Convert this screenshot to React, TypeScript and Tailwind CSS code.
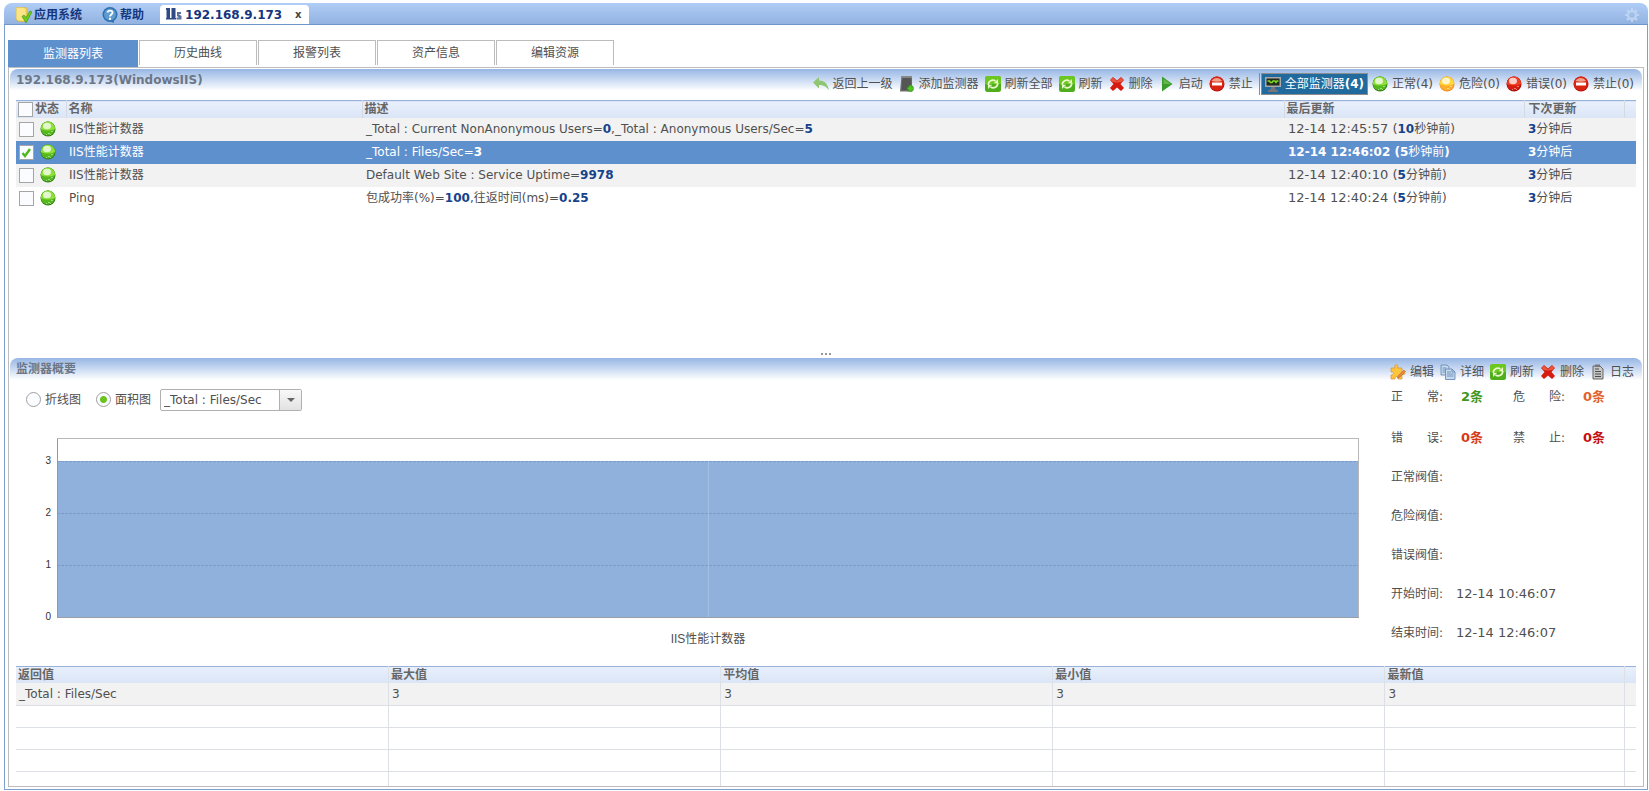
import { useState } from 'react'
import type { ReactNode } from 'react'

type BallColor = 'green' | 'yellow' | 'red'

const BALLS = {
  green: { light: '#8fe03a', mid: '#55b81c', dark: '#2f7f14' },
  yellow: { light: '#ffd83a', mid: '#ffae2b', dark: '#ee8d1c' },
  red: { light: '#ee3f22', mid: '#d41c0f', dark: '#a80f08' },
}

const MONITORS = [
  {
    name: 'IIS性能计数器',
    values: [['_Total : Current NonAnonymous Users=', '0'], [',_Total : Anonymous Users/Sec=', '5']],
    updated: '12-14 12:45:57', ago: '10', unit: '秒钟前',
  },
  {
    name: 'IIS性能计数器',
    values: [['_Total : Files/Sec=', '3']],
    updated: '12-14 12:46:02', ago: '5', unit: '秒钟前',
  },
  {
    name: 'IIS性能计数器',
    values: [['Default Web Site : Service Uptime=', '9978']],
    updated: '12-14 12:40:10', ago: '5', unit: '分钟前',
  },
  {
    name: 'Ping',
    values: [['包成功率(%)=', '100'], [',往返时间(ms)=', '0.25']],
    updated: '12-14 12:40:24', ago: '5', unit: '分钟前',
  },
]

const TABS = ['监测器列表', '历史曲线', '报警列表', '资产信息', '编辑资源']

function Ball({ color }: { color: BallColor }) {
  const c = BALLS[color]
  return (
    <svg viewBox="0 0 16 16" className="size-4 shrink-0">
      <circle cx="8" cy="8" r="7.5" fill={c.dark} />
      <circle cx="7.8" cy="7.5" r="7" fill={c.mid} />
      <path d="M.8 8a7.200 7.200 0 0 1 14.400 0Q8 11 .8 8z" fill={c.light} />
      <ellipse cx="7" cy="5" rx="4" ry="3.200" fill="#fff" opacity=".75" />
      <path d="M8 12h2v1H8zM11 10h2v1h-2zM6 13h1v1H6zM10 13h1v1h-1z" fill="#fff" opacity=".45" />
    </svg>
  )
}

function ForbidIcon() {
  return (
    <svg viewBox="0 0 16 16" className="size-4 shrink-0">
      <circle cx="8" cy="8" r="7.5" fill="#b5140a" />
      <circle cx="7.8" cy="7.5" r="7" fill="#d92412" />
      <path d="M2.500 5a6 6 0 0 1 10.500 0Q8 6.500 2.500 5z" fill="#f3a089" />
      <rect x="3" y="6.500" width="10" height="3" fill="#fff" />
    </svg>
  )
}

function BackIcon() {
  return (
    <svg viewBox="0 0 16 16" className="size-4 shrink-0">
      <path d="M0 6.500L6 1v3.500c6 0 9 4 10 10C13.500 10.500 10.500 9 6 9v3.500z" fill="#8fc672" />
    </svg>
  )
}

function AddIcon() {
  return (
    <svg viewBox="0 0 16 16" className="size-4 shrink-0">
      <path d="M1 15.500L2.500 0H13v15.500z" fill="#6c6c6c" />
      <path d="M3.500 2H12v12H2.500z" fill="#555" />
      <path d="M2.500 0H13v2H2.500z" fill="#868686" />
      <path d="M11.500 9.500v6M8.500 12.500h6" stroke="#2f8e17" strokeWidth="4" />
      <path d="M11.500 9.500v6M8.500 12.500h6" stroke="#52c81e" strokeWidth="2.200" />
    </svg>
  )
}

function RefreshIcon() {
  return (
    <svg viewBox="0 0 16 16" className="size-4 shrink-0">
      <rect width="16" height="16" rx="2.500" fill="#4fae1c" />
      <path d="M0 8V2.500A2.500 2.500 0 0 1 2.500 0h11A2.500 2.500 0 0 1 16 2.500V8z" fill="#6cc820" />
      <path d="M3.300 9c-.2-4 4-6 7.200-4M12.700 7c.2 4-4 6-7.200 4" fill="none" stroke="#e9f7c8" strokeWidth="1.700" />
      <path d="M13 3v4.200H8.800zM3 13V8.800h4.200z" fill="#e9f7c8" />
    </svg>
  )
}

function DeleteIcon() {
  return (
    <svg viewBox="0 0 16 16" className="size-4 shrink-0">
      <path d="M1 4l3-3 4 3.500L12 1l3 3-3.500 4 3.500 4-3 3-4-3.500L4 15l-3-3 3.500-4z" fill="#d61a10" />
      <path d="M1.500 4L4 1.500 8 5.500 12 1.500 14.500 4l-2 2L8 6.500 3.500 6z" fill="#e8553f" />
    </svg>
  )
}

function StartIcon() {
  return (
    <svg viewBox="0 0 16 16" className="size-4 shrink-0">
      <path d="M3 .5L13.500 8 3 15.500z" fill="#3b9b2d" />
      <path d="M4.500 3L12 8H4.500z" fill="#62b84b" />
    </svg>
  )
}

function MonitorIcon() {
  return (
    <svg viewBox="0 0 16 16" className="size-4 shrink-0">
      <path d="M0 1h16v10H0z" fill="#a8a8a8" />
      <path d="M1.500 2.500h13v7h-13z" fill="#222c1c" />
      <path d="M2.500 5h2l1 1.500h1.500l1-1.500h2l1 1.500 1-1.500h1.500" fill="none" stroke="#7ed827" strokeWidth="1.500" />
      <path d="M6 11h4v2l3 1.500V16H3v-1.500L6 13z" fill="#777" />
    </svg>
  )
}

function EditIcon() {
  return (
    <svg viewBox="0 0 16 16" className="size-4 shrink-0">
      <path d="M5 4c-1.500-4.500 4-4.500 2.700 0H12v4c4-.8 4 3.500 0 2.500V15H8c.7-3.500-3.500-3.500-3 0H1v-4c3.500 0 3.500-3.500 0-3V4z" fill="#fdc53c" stroke="#d99135" strokeWidth=".7" />
      <path d="M7.500 14l.8-2.500L14 6l1.500 1.500L10 13z" fill="#e8883d" stroke="#b35c22" strokeWidth=".5" />
    </svg>
  )
}

function DetailIcon() {
  return (
    <svg viewBox="0 0 16 16" className="size-4 shrink-0" fill="#c4d9ee" stroke="#5d83ad" strokeWidth=".8">
      <path d="M1 1h6l2 2v8H1z" />
      <path d="M5.500 5h6.500l3 3v7.500H5.500z" />
      <path d="M2.500 4h4M2.500 6h2.500M2.500 8h2.500M7 8h4M7 10h6.500M7 12h6.500M12 5v3h3" fill="none" />
    </svg>
  )
}

function LogIcon() {
  return (
    <svg viewBox="0 0 16 16" className="size-4 shrink-0">
      <path d="M3 2h7l3 3v10H3z" fill="#c6c6c6" stroke="#666" />
      <path d="M5 5h4M5 7.500h6M5 10h6M5 12.500h6" stroke="#4c4c4c" />
      <path d="M5 .5h5V3H5z" fill="#777" />
    </svg>
  )
}

function AppIcon() {
  return (
    <svg viewBox="0 0 16 16" className="size-4 shrink-0">
      <path d="M.5.5H10l1 1.500v12.500H3L.5 13z" fill="#f5d24e" stroke="#d9b43b" strokeWidth=".6" />
      <path d="M.5.800h7l2 1.800v11H3L.5 12z" fill="#fbe588" />
      <path d="M6 9.500l2-1.500 2 2.500L14 4l2 1-6 11z" fill="#6fcb1e" stroke="#3c9410" strokeWidth=".6" />
    </svg>
  )
}

function HelpIcon() {
  return (
    <svg viewBox="0 0 16 16" className="size-4 shrink-0">
      <circle cx="8" cy="7.500" r="7.500" fill="#2d6fae" />
      <path d="M7 14l5 2-.5-4z" fill="#2d6fae" />
      <circle cx="8" cy="7.500" r="6" fill="#5d9bd0" />
      <path d="M5.500 5.500C6 2.700 10.700 3 10.500 5.700 10.300 7.500 8.200 7.400 8 9.500" fill="none" stroke="#fff" strokeWidth="1.800" />
      <rect x="7" y="10.800" width="2" height="2" fill="#fff" />
    </svg>
  )
}

// three little server towers
function ServerIcon() {
  return (
    <svg viewBox="0 0 16 16" className="size-4 shrink-0" fill="#2f4a84">
      <path d="M0 1h4v2H0zM.5 3H4v8.500H.5zM0 11h5v1.500H0z" />
      <path d="M5.500 1h4v10.500h-4zM5 11h5v1.500H5z" />
      <path d="M11 5h4v2h-2.500l3 2v3.500h-5V10.500H13L11 9z" opacity=".8" />
    </svg>
  )
}

function GearIcon() {
  return (
    <svg viewBox="0 0 16 16" className="size-4 shrink-0" stroke="#bdd3f2" fill="none">
      <circle cx="8" cy="8" r="4" strokeWidth="2.400" />
      <path d="M8 1v2.500M8 12.500V15M1 8h2.500M12.500 8H15M3 3l1.800 1.800M11.200 11.200L13 13M3 13l1.800-1.800M11.200 4.800L13 3" strokeWidth="2.200" />
    </svg>
  )
}

function ToolButton({ icon, children }: { icon: ReactNode; children: ReactNode }) {
  return (
    <button type="button" className="flex items-center gap-1 whitespace-nowrap">
      {icon}
      <span>{children}</span>
    </button>
  )
}

function CheckBox({ label, checked, onChange }: { label: string; checked: boolean; onChange: () => void }) {
  return (
    <span className="grid size-[15px] shrink-0">
      <input
        type="checkbox"
        aria-label={label}
        checked={checked}
        onChange={onChange}
        className="peer col-start-1 row-start-1 size-[15px] appearance-none border border-[#a5a5a5] bg-[#fbfcff]"
      />
      <svg viewBox="0 0 15 15" className="pointer-events-none invisible col-start-1 row-start-1 size-[15px] peer-checked:visible">
        <path d="M3.500 8l2.500 3 5-7" fill="none" stroke="#4db81c" strokeWidth="2.400" />
      </svg>
    </span>
  )
}

function ChartRadio({ label, checked, onChange }: { label: string; checked: boolean; onChange: () => void }) {
  return (
    <label className="flex items-center gap-1">
      <input
        type="radio"
        name="chart"
        checked={checked}
        onChange={onChange}
        className="size-[15px] appearance-none rounded-full border border-[#a0a0a0] bg-[#fbfcff] checked:bg-[radial-gradient(circle,#6bc41c_3px,#fbfcff_4px)]"
      />
      {label}
    </label>
  )
}

function Count({ label, value, color }: { label: [string, string]; value: string; color: string }) {
  return (
    <div className="flex">
      <dt className="flex w-[70px] gap-6">
        <span>{label[0]}</span>
        <span>{label[1]}:</span>
      </dt>
      <dd className={`w-[52px] text-[13px] font-bold ${color}`}>{value}</dd>
    </div>
  )
}

function AreaChart() {
  return (
    <figure className="pt-[27px]">
      <div className="flex items-start">
        <div className="flex h-[185px] w-[47px] flex-col justify-between pt-[17px] pr-1.5 text-right font-[family-name:Liberation_Sans,sans-serif] text-[10px] leading-3 text-[#333]">
          <span>3</span>
          <span>2</span>
          <span>1</span>
          <span>0</span>
        </div>
        <svg className="h-[180px] min-w-0 flex-1" shapeRendering="crispEdges">
          <rect x="0" y="23" width="100%" height="156" fill="#8fb1dc" />
          <line x1="50%" x2="50%" y1="23" y2="179" stroke="#a3c0e4" />
          {[23, 75, 127].map(y => (
            <line key={y} x1="0" x2="100%" y1={y + 0.5} y2={y + 0.5} stroke="#7d9bc4" strokeDasharray="3 1" />
          ))}
          <path d="M.5 0v180" stroke="#8a9aaf" />
          <line x1="0" x2="100%" y1=".5" y2=".5" stroke="#b8b8b8" />
          <line x1="100%" x2="100%" y1="0" y2="180" stroke="#b8b8b8" strokeWidth="2" />
          <line x1="0" x2="100%" y1="179.500" y2="179.500" stroke="#9a9ea6" />
        </svg>
      </div>
      <figcaption className="pt-[7px] pl-[47px] text-center font-[family-name:Liberation_Sans,Noto_Sans_CJK_SC,sans-serif] leading-[18px]">
        IIS性能计数器
      </figcaption>
    </figure>
  )
}

export default function App() {
  const [tab, setTab] = useState(0)
  const [selected, setSelected] = useState([1])
  const [chart, setChart] = useState('area')

  function toggle(index: number) {
    setSelected(s => s.includes(index) ? s.filter(i => i !== index) : [...s, index])
  }

  return (
    <div className="flex min-h-screen flex-col bg-white pt-[3px] pr-px pb-px pl-1 font-[family-name:DejaVu_Sans,Noto_Sans_CJK_SC,sans-serif] text-xs text-[#505050]">
      <header className="flex h-[22px] shrink-0 items-center rounded-t-lg border-b border-[#6f96cc] bg-linear-to-b from-[#b0cdf6] to-[#92b2e0] pt-0.5 pr-2 pl-3 font-bold text-[#15367d]">
        <button type="button" className="flex items-center gap-0.5"><AppIcon />应用系统</button>
        <button type="button" className="ml-5 flex items-center gap-0.5"><HelpIcon />帮助</button>
        <div className="ml-4 flex h-full w-[149px] items-center gap-[3px] rounded-t bg-white pl-1.5">
          <ServerIcon />
          <span className="flex-1">192.168.9.173</span>
          <button type="button" aria-label="关闭" className="w-3.5 text-left text-[10px] text-[#444]">x</button>
        </div>
        <button type="button" aria-label="设置" className="ml-auto"><GearIcon /></button>
      </header>

      <main className="flex flex-1 flex-col border-x border-b border-[#7da0d0] px-[3px] pt-[15px] pb-0.5">
        <nav className="flex gap-px">
          {TABS.map((label, index) => (
            <button
              key={label}
              type="button"
              onClick={() => setTab(index)}
              className={index === tab
                ? 'h-[27px] w-[130px] bg-[#5f90ce] text-white'
                : 'h-[25px] w-[118px] border border-b-0 border-[#bcbcbc] bg-white'}
            >
              {label}
            </button>
          ))}
        </nav>

        <div className="flex flex-1 flex-col border border-[#bdbdbd] px-px pt-px">
          <section className="flex min-h-[280px] flex-1 flex-col">
            <div className="flex h-[31px] items-start justify-between rounded-t-lg bg-linear-to-b from-[#97b6e4] to-white to-70% pr-2 pl-1.5">
              <h1 className="leading-[22px] font-bold text-[#6b7686]">192.168.9.173(WindowsIIS)</h1>
              <div className="flex items-center gap-1.5 pt-1">
                <ToolButton icon={<BackIcon />}>返回上一级</ToolButton>
                <ToolButton icon={<AddIcon />}>添加监测器</ToolButton>
                <ToolButton icon={<RefreshIcon />}>刷新全部</ToolButton>
                <ToolButton icon={<RefreshIcon />}>刷新</ToolButton>
                <ToolButton icon={<DeleteIcon />}>删除</ToolButton>
                <ToolButton icon={<StartIcon />}>启动</ToolButton>
                <ToolButton icon={<ForbidIcon />}>禁止</ToolButton>
                <div className="flex items-center gap-1">
                  <div className="border-l border-[#8a8a8a] pl-px">
                    <button type="button" className="flex h-[22px] items-center gap-1 border border-[#8d8d8d] bg-[#216a9e] px-[3px] whitespace-nowrap text-white">
                      <MonitorIcon />
                      <span>全部监测器<b>(4)</b></span>
                    </button>
                  </div>
                  <ToolButton icon={<Ball color="green" />}>正常(4)</ToolButton>
                </div>
                <ToolButton icon={<Ball color="yellow" />}>危险(0)</ToolButton>
                <ToolButton icon={<Ball color="red" />}>错误(0)</ToolButton>
                <ToolButton icon={<ForbidIcon />}>禁止(0)</ToolButton>
              </div>
            </div>

            <div className="flex-1 px-1.5">
              <table className="w-full table-fixed border-collapse text-left">
                <colgroup>
                  <col className="w-[50px]" />
                  <col className="w-[296px]" />
                  <col />
                  <col className="w-[240px]" />
                  <col className="w-[100px]" />
                  <col className="w-3" />
                </colgroup>
                <thead>
                  <tr className="h-[17px] border-t border-[#97b1d9] bg-linear-to-b from-[#e9f0fc] to-[#dae5f6] leading-4 text-[#666]">
                    <th className="p-0">
                      <div className="flex items-center pl-0.5">
                        <CheckBox
                          label="全选"
                          checked={selected.length === MONITORS.length}
                          onChange={() => setSelected(selected.length === MONITORS.length ? [] : MONITORS.map((_, i) => i))}
                        />
                        <span className="pl-0.5 whitespace-nowrap">状态</span>
                      </div>
                    </th>
                    <th className="border-l border-[#d4d9e2] p-0 pl-0.5">名称</th>
                    <th className="border-l border-[#d4d9e2] p-0 pl-0.5">描述</th>
                    <th className="border-l border-[#d4d9e2] p-0 pl-0.5">最后更新</th>
                    <th className="border-l border-[#d4d9e2] p-0 pl-1">下次更新</th>
                    <th className="border-l border-[#d4d9e2] p-0" />
                  </tr>
                </thead>
                <tbody>
                  {MONITORS.map((row, index) => {
                    const on = selected.includes(index)
                    const number = on ? 'text-white' : 'text-[#15428b]'
                    return (
                      <tr key={index} className={on ? 'h-[23px] bg-[#5f90ce] text-white' : 'h-[23px] odd:bg-[#f2f2f2]'}>
                        <td className="p-0">
                          <div className="flex items-center gap-1.5 pl-[3px]">
                            <CheckBox label={`选择 ${index + 1}`} checked={on} onChange={() => toggle(index)} />
                            <Ball color="green" />
                          </div>
                        </td>
                        <td className="p-0 pl-[3px]">{row.name}</td>
                        <td className="truncate p-0 pl-1">
                          {row.values.map(([label, value]) => (
                            <span key={label}>{label}<b className={number}>{value}</b></span>
                          ))}
                        </td>
                        <td className="p-0 pl-1">
                          <span className={on ? 'font-bold' : 'text-[13px]'}>{row.updated} (</span>
                          <b className={number}>{row.ago}</b>{row.unit}
                          <span className={on ? 'font-bold' : ''}>)</span>
                        </td>
                        <td className="p-0 pl-1"><b className={number}>3</b>分钟后</td>
                        <td className="p-0" />
                      </tr>
                    )
                  })}
                </tbody>
              </table>
            </div>
            <div className="flex h-[7px] items-center justify-center gap-0.5">
              <i className="size-0.5 bg-[#999]" />
              <i className="size-0.5 bg-[#999]" />
              <i className="size-0.5 bg-[#999]" />
            </div>
          </section>

          <section>
            <div className="flex h-[22px] items-start justify-between rounded-t-lg bg-linear-to-b from-[#97b6e4] to-white pr-2 pl-1.5">
              <h2 className="leading-[22px] font-bold text-[#6b7686]">监测器概要</h2>
              <div className="flex items-center gap-1.5 pt-1.5">
                <ToolButton icon={<EditIcon />}>编辑</ToolButton>
                <ToolButton icon={<DetailIcon />}>详细</ToolButton>
                <ToolButton icon={<RefreshIcon />}>刷新</ToolButton>
                <ToolButton icon={<DeleteIcon />}>删除</ToolButton>
                <ToolButton icon={<LogIcon />}>日志</ToolButton>
              </div>
            </div>

            <div className="flex">
              <div className="min-w-0 flex-1">
                <div className="flex items-center gap-[15px] pt-[9px] pl-4">
                  <ChartRadio label="折线图" checked={chart === 'line'} onChange={() => setChart('line')} />
                  <ChartRadio label="面积图" checked={chart === 'area'} onChange={() => setChart('area')} />
                  <div className="-ml-1.5 grid h-[22px] w-[142px] grid-cols-[1fr_22px] rounded-xs border border-[#b0b0b0]">
                    <select aria-label="指标" className="col-span-2 col-start-1 row-start-1 appearance-none bg-transparent pl-[3px]">
                      <option>_Total : Files/Sec</option>
                    </select>
                    <span className="pointer-events-none col-start-2 row-start-1 flex items-center justify-center border-l border-[#b0b0b0] bg-linear-to-b from-[#f8f8f8] to-[#e2e2e2]">
                      <svg viewBox="0 0 8 4" className="h-1 w-2"><path d="M0 0h8L4 4z" fill="#666" /></svg>
                    </span>
                  </div>
                </div>
                <AreaChart />
              </div>

              <dl className="flex w-[283px] shrink-0 flex-col gap-[21px] pt-2 pl-8 leading-[18px]">
                <div className="flex pb-0.5">
                  <Count label={['正', '常']} value="2条" color="text-[#3f961c]" />
                  <Count label={['危', '险']} value="0条" color="text-[#e2622c]" />
                </div>
                <div className="flex">
                  <Count label={['错', '误']} value="0条" color="text-[#d63a17]" />
                  <Count label={['禁', '止']} value="0条" color="text-[#c41010]" />
                </div>
                <dt>正常阀值:</dt>
                <dt>危险阀值:</dt>
                <dt>错误阀值:</dt>
                <div className="flex">
                  <dt className="w-[65px]">开始时间:</dt>
                  <dd className="text-[13px]">12-14 10:46:07</dd>
                </div>
                <div className="flex">
                  <dt className="w-[65px]">结束时间:</dt>
                  <dd className="text-[13px]">12-14 12:46:07</dd>
                </div>
              </dl>
            </div>

            <div className="px-1.5 pt-[18px]">
              <table className="w-full table-fixed border-collapse text-left">
                <colgroup>
                  <col className="w-[23%]" />
                  <col className="w-[20.5%]" />
                  <col className="w-[20.5%]" />
                  <col className="w-[20.5%]" />
                  <col />
                  <col className="w-3" />
                </colgroup>
                <thead>
                  <tr className="h-[17px] border-t border-[#97b1d9] bg-linear-to-b from-[#e9f0fc] to-[#dae5f6] leading-4 text-[#666]">
                    {['返回值', '最大值', '平均值', '最小值', '最新值', ''].map(label => (
                      <th key={label} className="border-l border-[#dcdfe4] p-0 pl-0.5 first:border-l-0">{label}</th>
                    ))}
                  </tr>
                </thead>
                <tbody>
                  {[['_Total : Files/Sec', '3', '3', '3', '3', ''], null, null, null].map((row, index) => (
                    <tr key={index} className="h-[22px] border-b border-[#dcdfe4] first:bg-[#f2f2f2]">
                      {(row || ['', '', '', '', '', '']).map((cell, i) => (
                        <td key={i} className="border-l border-[#dcdfe4] p-0 pl-[3px] first:border-l-0">{cell}</td>
                      ))}
                    </tr>
                  ))}
                  <tr className="h-[15px]">
                    {[0, 1, 2, 3, 4, 5].map(i => (
                      <td key={i} className="border-l border-[#dcdfe4] p-0 first:border-l-0" />
                    ))}
                  </tr>
                </tbody>
              </table>
            </div>
          </section>
        </div>
      </main>
    </div>
  )
}
